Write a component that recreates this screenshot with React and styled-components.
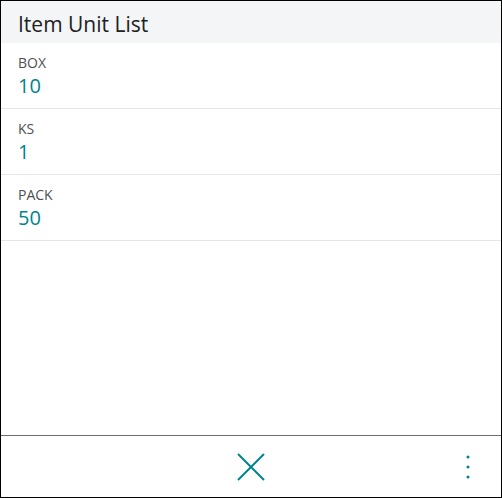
import React from "react";
import styled, { createGlobalStyle } from "styled-components";

const Global = createGlobalStyle`
  html, body { margin: 0; padding: 0; background: #fff; }
  * { box-sizing: border-box; }
`;

const Frame = styled.div`
  width: 502px;
  height: 498px;
  border: 1px solid #000;
  display: flex;
  flex-direction: column;
  font-family: "Open Sans", "Noto Sans", sans-serif;
  background: #fff;
`;

const Header = styled.div`
  height: 42px;
  background: #f4f5f7;
  padding: 3px 17px 0;
  display: flex;
  align-items: center;
  font-size: 21px;
  color: #212121;
`;

const List = styled.div`
  flex: 1;
  display: flex;
  flex-direction: column;
`;

const Row = styled.div`
  height: 66px;
  border-bottom: 1px solid #e6e6e6;
  padding: 10px 17px 0;
  display: flex;
  flex-direction: column;
`;

const Label = styled.div`
  font-size: 14px;
  line-height: 20px;
  color: #505050;
`;

const Value = styled.div`
  font-size: 20px;
  line-height: 26px;
  color: #00838f;
`;

const Footer = styled.div`
  height: 62px;
  border-top: 1px solid #6e6e6e;
  display: grid;
  grid-template-columns: 1fr auto 1fr;
  align-items: center;
`;

const IconButton = styled.button`
  background: none;
  border: none;
  padding: 0;
  display: flex;
  align-items: center;
  justify-content: center;
  cursor: pointer;
  justify-self: ${(p) => p.$justify || "center"};
  margin-right: ${(p) => p.$mr || 0}px;
`;

const items = [
  { code: "BOX", qty: "10" },
  { code: "KS", qty: "1" },
  { code: "PACK", qty: "50" },
];

export default function App() {
  return (
    <>
      <Global />
      <Frame>
        <Header>Item Unit List</Header>
        <List>
          {items.map((it) => (
            <Row key={it.code}>
              <Label>{it.code}</Label>
              <Value>{it.qty}</Value>
            </Row>
          ))}
        </List>
        <Footer>
          <span />
          <IconButton aria-label="Close">
            <svg width="28" height="28" viewBox="0 0 28 28">
              <path d="M1 1 L27 27 M27 1 L1 27" stroke="#00838f" strokeWidth="2" fill="none" />
            </svg>
          </IconButton>
          <IconButton aria-label="More" $justify="end" $mr={30}>
            <svg width="6" height="26" viewBox="0 0 6 26">
              <circle cx="3" cy="3" r="1.5" fill="#00838f" />
              <circle cx="3" cy="13" r="1.5" fill="#00838f" />
              <circle cx="3" cy="23" r="1.5" fill="#00838f" />
            </svg>
          </IconButton>
        </Footer>
      </Frame>
    </>
  );
}
